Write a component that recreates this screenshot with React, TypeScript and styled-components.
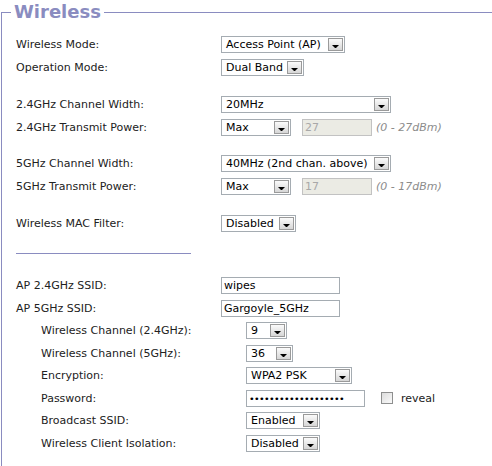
import React from 'react'
import styled, { createGlobalStyle } from 'styled-components'

const GlobalStyle = createGlobalStyle`
  html, body {
    margin: 0;
    padding: 0;
    background: #fff;
    overflow: hidden;
  }
  body {
    font-family: 'DejaVu Sans', Verdana, sans-serif;
    font-size: 11px;
    color: #222;
  }
`

const Fieldset = styled.fieldset`
  margin: 0 0 0 1px;
  min-width: 0;
  border: 0;
  border-top: 1px solid #8a8cc0;
  border-left: 1px solid #8a8cc0;
  padding: 9px 0 20px 14px;
`

const Legend = styled.legend`
  margin-left: -5px;
  padding: 0 3px;
  font-size: 18px;
  font-weight: bold;
  line-height: 24px;
  color: #8a8cc0;
`

const Row = styled.div<{ $compact?: boolean }>`
  display: flex;
  align-items: center;
  height: ${p => (p.$compact ? '22.5px' : '23px')};
`

const Spacer = styled.div`
  height: 13.5px;
`

const Label = styled.div`
  width: 205px;
  flex: none;
  white-space: nowrap;
`

const Indent = styled.div`
  padding-left: 25px;
`

const Divider = styled.div`
  width: 175px;
  height: 1px;
  background: #8a8cc0;
  margin: 18px 0 21px;
`

const SelectBox = styled.div<{ $w: number }>`
  box-sizing: border-box;
  width: ${p => p.$w}px;
  height: 17px;
  padding: 1px;
  border: 1px solid #a5acb2;
  background: #fff;
  display: flex;
  align-items: center;
  color: #000;
  flex: none;
`

const SelectText = styled.span`
  flex: 1;
  padding-left: 3px;
  white-space: nowrap;
  overflow: hidden;
  line-height: 13px;
`

const DropButton = styled.span`
  position: relative;
  flex: none;
  box-sizing: border-box;
  width: 15px;
  height: 13px;
  border: 1px solid #9a9a9a;
  background: linear-gradient(#fbfbfb, #d6d6d6);

  &::after {
    content: '';
    position: absolute;
    left: 3px;
    bottom: 2px;
    width: 1px;
    height: 0;
    border-left: 3px solid transparent;
    border-right: 3px solid transparent;
    border-top: 3px solid #000;
  }
`

const TextField = styled.input<{ $w: number }>`
  box-sizing: border-box;
  width: ${p => p.$w}px;
  height: 17px;
  margin: 0;
  padding: 0 2px;
  border: 1px solid #a5acb2;
  background: #fff;
  font-family: 'DejaVu Sans', Verdana, sans-serif;
  font-size: 11px;
  color: #000;
  outline: none;

  &:disabled {
    margin-left: 11px;
    background: #ebebe4;
    border-color: #c2c2c2;
    color: #a8a8a8;
  }
`

const PasswordBox = styled.div`
  box-sizing: border-box;
  width: 119px;
  height: 17px;
  padding: 0 2px;
  border: 1px solid #a5acb2;
  font-size: 9.5px;
  letter-spacing: -0.6px;
  line-height: 15px;
  color: #000;
  white-space: nowrap;
  overflow: hidden;
`

const Hint = styled.span`
  margin-left: 4px;
  font-style: italic;
  color: #8c8c8c;
`

const Check = styled.span`
  box-sizing: border-box;
  width: 12px;
  height: 12px;
  margin-left: 16px;
  border: 1px solid #8e8f8f;
  background: linear-gradient(135deg, #dcdcdc, #fafafa);
`

const CheckLabel = styled.span`
  margin-left: 8px;
`

function Select({ value, width }: { value: string; width: number }) {
  return (
    <SelectBox $w={width}>
      <SelectText>{value}</SelectText>
      <DropButton />
    </SelectBox>
  )
}

function Power({ max }: { max: number }) {
  return (
    <>
      <Select value="Max" width={70} />
      <TextField $w={70} value={String(max)} disabled readOnly />
      <Hint>(0 - {max}dBm)</Hint>
    </>
  )
}

export default function App() {
  return (
    <>
      <GlobalStyle />
      <Fieldset>
        <Legend>Wireless</Legend>

        <Row>
          <Label>Wireless Mode:</Label>
          <Select value="Access Point (AP)" width={124} />
        </Row>
        <Row>
          <Label>Operation Mode:</Label>
          <Select value="Dual Band" width={83} />
        </Row>
        <Spacer />

        <Row>
          <Label>2.4GHz Channel Width:</Label>
          <Select value="20MHz" width={170} />
        </Row>
        <Row>
          <Label>2.4GHz Transmit Power:</Label>
          <Power max={27} />
        </Row>
        <Spacer />

        <Row>
          <Label>5GHz Channel Width:</Label>
          <Select value="40MHz (2nd chan. above)" width={170} />
        </Row>
        <Row>
          <Label>5GHz Transmit Power:</Label>
          <Power max={17} />
        </Row>
        <Spacer />

        <Row>
          <Label>Wireless MAC Filter:</Label>
          <Select value="Disabled" width={75} />
        </Row>

        <Divider />

        <Row $compact>
          <Label>AP 2.4GHz SSID:</Label>
          <TextField $w={119} value="wipes" readOnly />
        </Row>
        <Row $compact>
          <Label>AP 5GHz SSID:</Label>
          <TextField $w={119} value="Gargoyle_5GHz" readOnly />
        </Row>

        <Indent>
          <Row $compact>
            <Label>Wireless Channel (2.4GHz):</Label>
            <Select value="9" width={41} />
          </Row>
          <Row $compact>
            <Label>Wireless Channel (5GHz):</Label>
            <Select value="36" width={47} />
          </Row>
          <Row $compact>
            <Label>Encryption:</Label>
            <Select value="WPA2 PSK" width={106} />
          </Row>
          <Row $compact>
            <Label>Password:</Label>
            <PasswordBox>{'\u2022'.repeat(19)}</PasswordBox>
            <Check />
            <CheckLabel>reveal</CheckLabel>
          </Row>
          <Row $compact>
            <Label>Broadcast SSID:</Label>
            <Select value="Enabled" width={74} />
          </Row>
          <Row $compact>
            <Label>Wireless Client Isolation:</Label>
            <Select value="Disabled" width={74} />
          </Row>
        </Indent>
      </Fieldset>
    </>
  )
}
